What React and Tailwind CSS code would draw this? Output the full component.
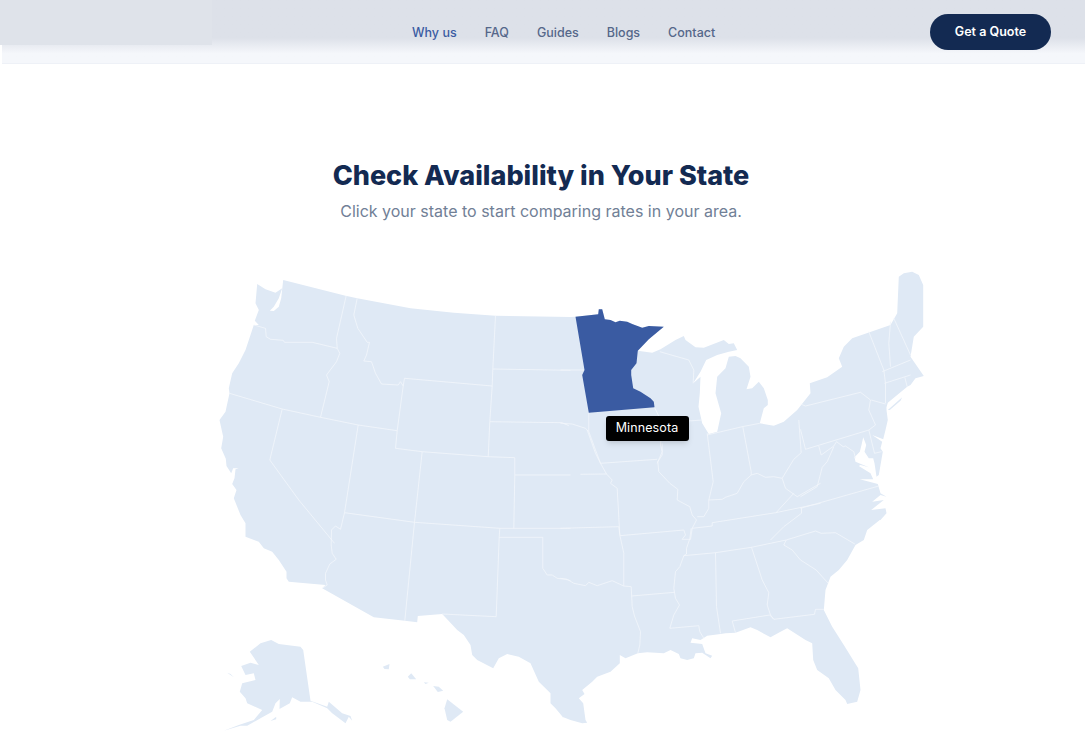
const pts = (ox, oy, s) =>
  s.trim().split(/\s+/).map((p) => {
    const [x, y] = p.split(',').map(Number);
    return `${(ox + x / 3).toFixed(1)},${(oy + y / 3).toFixed(1)}`;
  }).join(' ');

// outline traced clockwise, coordinates read off 3x crops of the map
const mainland = [
  pts(210, 260, '218,60 405,107 440,115 600,145 730,158 855,167 1080,171'),
  pts(560, 260, `45,170 113,163 115,148 125,148 133,178 150,180 165,187 178,182 200,185 215,192 245,203 265,198 310,200 265,238 240,265 232,272 275,278 300,268 345,240 370,228 375,240 405,262 430,263 490,240 505,252 520,250 530,270 505,275 470,285 437,300 420,335 398,370 420,350 418,400 414,440 425,490 445,522 470,515 482,460 465,400 470,350 495,325 505,290 525,288 540,295 565,320 570,350 558,388 575,385 595,365 610,385 622,420 622,435 610,445 598,490 640,497 670,485 710,450 750,400 748,370 800,352 845,320 835,295 850,260 875,235 990,195 1010,160 1015,50 1030,40 1055,35 1075,45 1088,75 1088,200 1060,230 1050,290 1090,348 1065,355 1050,375`),
  pts(800, 380, `320,20 262,68 258,82 258,90 262,120 255,150 248,178 215,165 245,185 240,205 247,215 235,285 228,290 222,250 218,235 205,235 192,215 197,195 188,172 183,195 178,215 162,232 165,245 205,262 180,255 175,258 210,280 218,298 178,298 232,312 240,340 258,350 240,345 215,365 250,360 212,390 255,385 258,400 240,420`),
  pts(560, 490, `958,90 920,120 910,150 885,165 860,210 835,240 810,260 795,300 790,360 815,410 850,465 893,535 900,600 890,635 860,642 855,630 825,600 805,565 770,540 758,510 755,460 735,450 680,415 660,425 630,442 590,420 570,412 525,428 495,430 480,432 440,437 420,450 395,445 390,458 425,462 435,490 455,497 450,505 425,488 405,490 400,505 380,510 360,505 355,492 330,480 310,490 260,487 232,490 195,505 178,495 178,520 150,545 110,560 95,575 65,600 72,612 55,625 68,640 75,690 80,698 65,700 30,690 5,680`),
  pts(210, 490, `1060,685 1035,655 1020,640 1020,610 985,575 960,520 925,500 890,492 865,505 848,535 800,510 785,495 780,465 760,435 740,420 695,372 622,378 620,397 583,392 490,382 335,295 345,285 235,275 228,265 228,245 205,210 185,185 160,175 145,155 105,140 105,100 90,75 70,25 78,0`),
  pts(210, 260, `65,672 72,655 75,628 85,625 68,625 62,640 48,618 46,596 32,565 38,530 27,480 45,455 57,400 55,385 65,340 85,310 105,270 130,195 145,195 133,182 145,150 135,130 140,72 165,88 195,98 215,85 205,115 190,140 178,152 190,153 205,140 212,115`),
].join(' ');

const islands = [
  // Long Island
  pts(800, 380, '262,90 305,52 300,62 268,90'),
  // Alaska
  pts(210, 490, '118,485 150,460 182,450 205,462 270,470 278,480 300,632 350,650 355,635 395,670 420,678 425,692 415,680 405,700 365,670 350,655 305,635 270,635 245,622 238,640 207,657 208,627 195,640 185,665 150,685 110,707 90,707 40,722 85,705 130,690 155,660 110,640 105,625 88,605 95,580 135,570 130,550 105,555 92,528 120,518 145,525'),
  pts(210, 490, '50,548 70,562 60,552'),
  pts(210, 490, '180,693 197,680 197,688'),
  // Hawaii
  pts(210, 490, '517,530 537,522 535,538 522,537'),
  pts(210, 490, '592,560 602,550 617,568 598,568'),
  pts(210, 490, '640,577 655,578 645,582'),
  pts(210, 490, '668,588 685,590 698,602 682,606'),
  pts(210, 490, '710,628 758,665 720,695 710,690 702,655'),
];

const minnesota = pts(560, 260, '45,170 113,163 115,148 125,148 133,178 150,180 165,187 178,182 200,185 215,192 245,203 265,198 310,200 265,238 232,272 228,310 212,330 212,345 218,385 240,395 270,415 280,425 282,442 85,458 65,345 72,330');

const borders = [
  pts(210, 260, '407,107 378,235 380,265'),
  pts(210, 260, '440,115 430,165 442,205 470,247 477,247 468,285 460,303 483,305 495,340 513,372 563,375 570,365 578,378'),
  pts(210, 260, '130,195 165,205 167,230 180,238 218,241 222,247 305,247 380,265 388,280 378,305 348,345 356,365 330,472'),
  pts(210, 260, '57,400 215,447 330,472 443,495 560,512'),
  pts(210, 260, '215,447 178,600 265,720 372,850'),
  pts(210, 260, '443,495 408,720 402,758'),
  pts(210, 260, '582,355 578,378 560,512 555,565 635,575 833,590 913,593 913,645 910,805'),
  pts(210, 260, '582,355 845,378'),
  pts(210, 260, '855,167 847,327 845,378 838,485 833,590'),
  pts(210, 260, '847,327 1080,331'),
  pts(560, 260, '0,330 72,330'),
  pts(210, 260, '838,485 1055,488 1075,497'),
  pts(560, 260, '0,490 35,492 75,505 85,515'),
  pts(560, 260, '85,458 85,515 105,570 120,610'),
  pts(210, 260, '913,645 1080,645'),
  pts(210, 260, '635,575 612,787'),
  pts(210, 490, '612,97 583,392'),
  pts(210, 490, '402,68 612,97 868,115 1080,115'),
  pts(210, 490, '402,68 390,118 375,108 363,120 362,165 365,190 377,208 358,222 345,250 345,270 350,285 335,295'),
  pts(210, 490, '868,115 866,142 857,380 695,372'),
  pts(210, 490, '866,142 997,142 997,235 1010,255 1025,255 1040,265 1065,268 1080,272'),
  pts(560, 490, '0,265 20,268 40,280 75,287 85,277 110,287 155,272 190,288 212,290 215,350 222,378 240,425 238,465 232,490'),
  pts(560, 490, '0,115 175,110 178,135 190,190 190,288'),
  // middle of the country, read from the tighter crop
  pts(580, 420, '20,30 45,100 60,130 78,162 95,180 90,190 110,205 118,345'),
  pts(580, 420, '60,130 230,118'),
  pts(580, 420, '0,163 78,162'),
  pts(580, 420, '245,70 245,105 232,125 235,155 268,190 292,208 290,240 328,260 335,285 348,300 335,325'),
  pts(580, 420, '118,347 310,330 315,345 305,358 330,358 335,325 395,318 395,308 585,278 663,262 720,250'),
  pts(580, 420, '380,40 398,185 385,240 385,265 370,290 350,290'),
  pts(580, 420, '385,240 425,238 435,232 470,220 490,185 512,165'),
  pts(580, 420, '487,20 512,155 512,165 530,160 555,172 580,170 605,175 620,150 640,118 662,98 655,0'),
  pts(580, 420, '605,175 615,205 650,230 685,210 720,190'),
  pts(580, 420, '640,220 585,280'),
  pts(580, 420, '663,262 663,280 610,320 570,360'),
  pts(560, 260, '282,442 305,490 300,555 305,575 290,610'),
  pts(560, 260, '290,490 425,480'),
  pts(560, 260, '298,275 385,300 400,330 398,370'),
  pts(560, 260, '440,525 545,500 598,490'),
  pts(560, 260, '925,215 970,330 975,370 975,430'),
  pts(560, 260, '990,185 985,250 990,320'),
  pts(560, 260, '1000,175 1050,285'),
  pts(560, 260, '965,335 1050,300'),
  pts(560, 260, '972,370 1050,345'),
  pts(560, 260, '1033,352 1040,380'),
  // mid-atlantic
  pts(800, 380, '0,72 15,78 180,37 210,60 205,90 225,135 205,150 15,208 0,148'),
  pts(800, 380, '212,60 255,72'),
  pts(800, 380, '205,150 222,220 243,215'),
  pts(800, 380, '55,198 62,225 100,198 108,185 128,200 135,198 160,215 165,235'),
  pts(800, 380, '100,200 80,245 65,262 50,320 0,350'),
  pts(800, 380, '0,385 235,318'),
  // south
  pts(560, 490, '392,115 388,146 378,175 378,192 370,197 358,230 345,245 340,295 345,325 357,345 340,375 328,415 415,407 418,425 430,445'),
  pts(560, 490, '213,318 342,307'),
  pts(560, 490, '465,188 468,350 480,430'),
  pts(560, 490, '370,197 465,188 573,172 677,150 765,123 782,130 825,128 883,162'),
  pts(560, 490, '573,172 605,270 625,308 620,345 630,375 640,388'),
  pts(560, 490, '515,393 628,375 640,388 762,373 765,358 790,358'),
  pts(560, 490, '515,393 525,428'),
  pts(560, 490, '677,150 670,165 695,180 720,210 767,240 803,280'),
];

const navLinks = ['Why us', 'FAQ', 'Guides', 'Blogs', 'Contact'];

const UsMap = () => (
  <svg width="800" height="487" viewBox="142.5 260 800 487" className="block">
    <polygon points={mainland} fill="#dfe9f5" />
    {islands.map((p, i) => (
      <polygon key={i} points={p} fill="#dfe9f5" />
    ))}
    {borders.map((p, i) => (
      <polyline key={i} points={p} fill="none" stroke="#f3f6fb" strokeWidth="0.8" strokeLinejoin="round" />
    ))}
    <polygon points={minnesota} fill="#3a5ba2" />
  </svg>
);

export default function App() {
  return (
    <div className="relative h-[747px] overflow-hidden bg-white font-['Inter',sans-serif]">
      <div className="absolute left-0 top-0 h-[45px] w-[212px] bg-[#dfe3ea]" />
      <header className="ml-[2px] flex h-[64px] items-start border-b border-[#eef1f7] bg-gradient-to-b from-[#dde1e9] from-60% to-[#f5f7fb] to-85%">
        <nav className="ml-[410px] mt-[24px] flex gap-[28px] text-[12.5px] font-medium leading-[18px] text-[#55678a]">
          {navLinks.map((link, i) => (
            <a key={link} className={i === 0 ? 'text-[#3a5ba2]' : ''}>
              {link}
            </a>
          ))}
        </nav>
        <button className="ml-auto mr-[34px] mt-[14px] h-[36px] w-[121px] rounded-full bg-[#132a52] pt-px text-[12.5px] font-semibold text-white">
          Get a Quote
        </button>
      </header>
      <section className="pr-[3px] pt-[93px] text-center">
        <h2 className="text-[27px] font-extrabold leading-[38px] text-[#132a52]">Check Availability in Your State</h2>
        <p className="mt-[4px] text-[16px] leading-[24px] text-[#718096]">
          Click your state to start comparing rates in your area.
        </p>
      </section>
      <div className="relative mt-[37px] flex justify-center">
        <UsMap />
        <div className="absolute left-[605.5px] top-[155.5px] flex h-[25px] w-[83px] items-center justify-center rounded-[3px] bg-black text-[12.5px] tracking-[0.1px] text-white shadow-md">
          Minnesota
        </div>
      </div>
    </div>
  );
}
